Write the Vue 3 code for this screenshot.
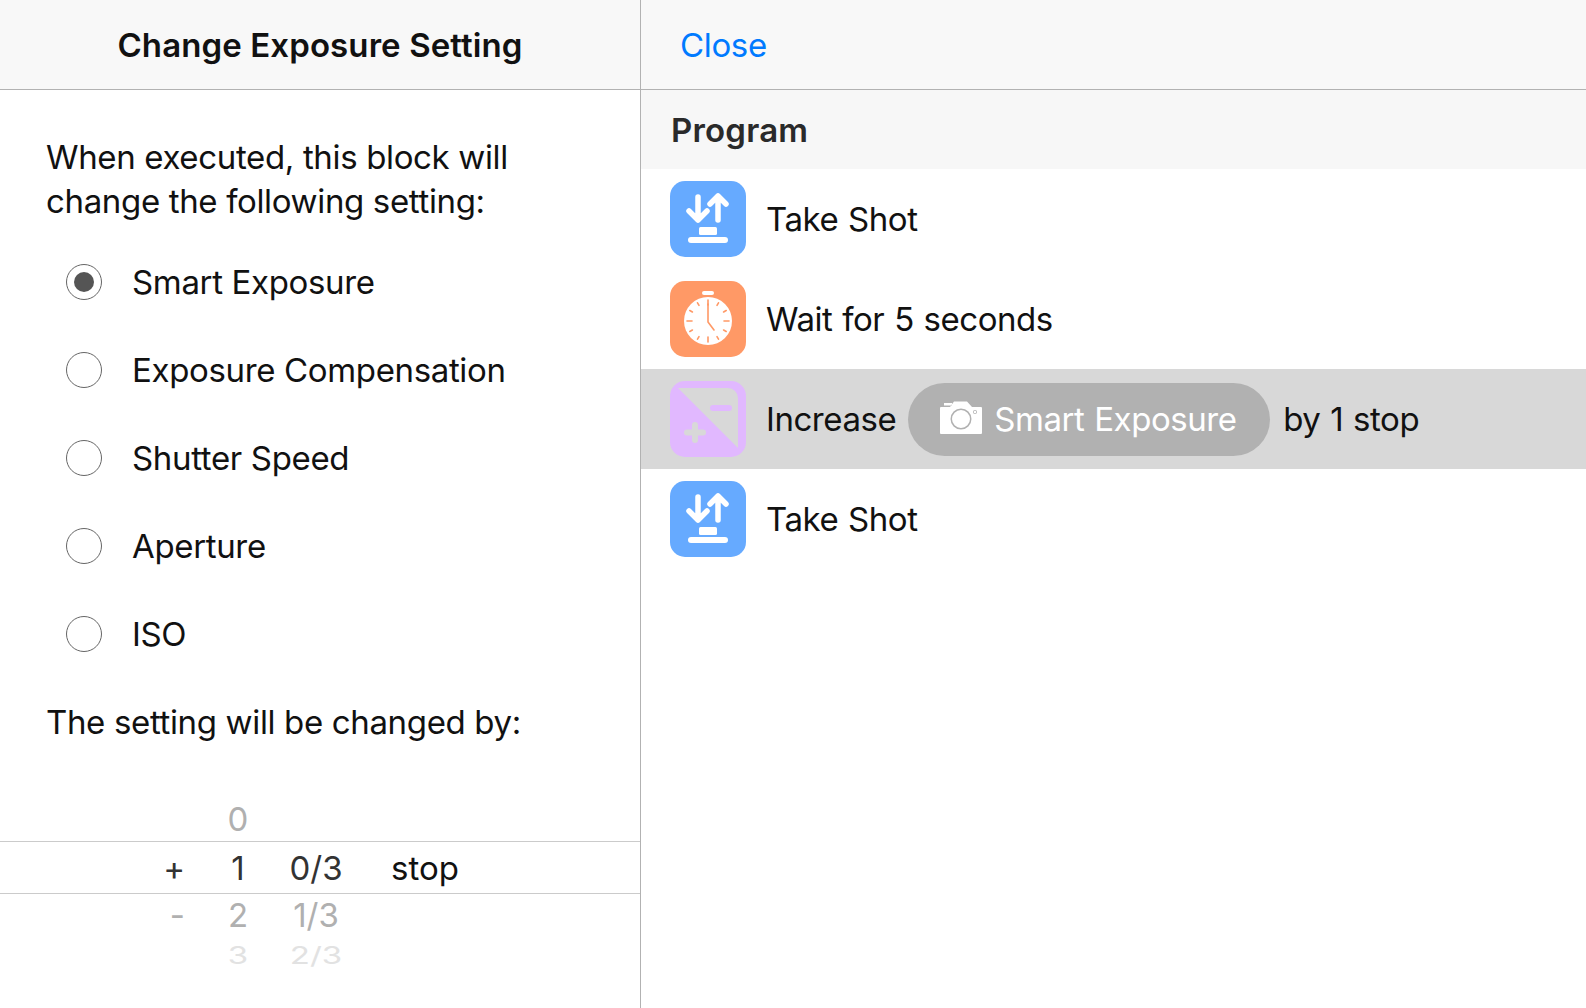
<template>
  <div class="screen">
    <div class="left">
      <header class="bar title">Change Exposure Setting</header>
      <p class="intro">When executed, this block will<br />change the following setting:</p>
      <div class="options">
        <div v-for="(opt, i) in options" :key="opt" class="option">
          <span class="radio" :class="{ on: i === 0 }"></span>
          <span>{{ opt }}</span>
        </div>
      </div>
      <p class="by">The setting will be changed by:</p>
      <div class="picker">
        <div class="prow far top"><span></span><span>0</span><span></span><span></span></div>
        <div class="prow sel"><span>+</span><span>1</span><span>0/3</span><span class="unit">stop</span></div>
        <div class="prow far"><span>-</span><span>2</span><span>1/3</span><span></span></div>
        <div class="prow farther"><span></span><span>3</span><span>2/3</span><span></span></div>
      </div>
    </div>

    <div class="right">
      <header class="bar close-bar"><span class="close">Close</span></header>
      <div class="section">Program</div>

      <div class="row">
        <div class="ico blue">
          <svg viewBox="0 0 76 76" width="76" height="76"><use href="#shot" /></svg>
        </div>
        <span>Take Shot</span>
      </div>

      <div class="row">
        <div class="ico orange">
          <svg viewBox="0 0 76 76" width="76" height="76">
            <rect x="32" y="10" width="12" height="4" rx="2" fill="#fff" />
            <circle cx="38" cy="40" r="24" fill="#fff" />
            <g stroke="#ff9966" stroke-width="1.6" stroke-linecap="round">
              <line v-for="a in ticks" :key="a" x1="38" y1="19" x2="38" :y2="a % 90 === 0 ? 24 : 22" :transform="`rotate(${a} 38 40)`" />
            </g>
            <path d="M38 23V41L44 49" fill="none" stroke="#ff9966" stroke-width="1.6" stroke-linecap="round" stroke-linejoin="round" />
          </svg>
        </div>
        <span>Wait for 5 seconds</span>
      </div>

      <div class="row active">
        <div class="ico purple">
          <svg viewBox="0 0 76 76" width="76" height="76">
            <path d="M8 7H58A10 10 0 0 1 68 17V67Z" fill="#d8d8d8" />
            <rect x="40" y="24" width="22" height="6" rx="3" fill="#e1b8ff" />
            <rect x="14" y="48.500" width="22" height="6" rx="3" fill="#d8d8d8" />
            <rect x="22" y="41" width="6" height="21" rx="3" fill="#d8d8d8" />
          </svg>
        </div>
        <span>Increase</span>
        <div class="pill">
          <svg viewBox="0 0 42 33" width="42" height="33">
            <path fill-rule="evenodd" fill="#fff" d="M4 2H12V4.500H4ZM1 6H10L14 0.500H27L32 6H41A1 1 0 0 1 42 7V32A1 1 0 0 1 41 33H1A1 1 0 0 1 0 32V7A1 1 0 0 1 1 6ZM21 7.500A10.500 10.500 0 1 0 21 28.500A10.500 10.500 0 1 0 21 7.500ZM21 9A9 9 0 1 1 21 27A9 9 0 1 1 21 9ZM35 9A2 2 0 1 0 35 13A2 2 0 1 0 35 9ZM35 9.800A1.200 1.200 0 1 1 35 12.200A1.200 1.200 0 1 1 35 9.800Z" />
          </svg>
          <span>Smart Exposure</span>
        </div>
        <span>by 1 stop</span>
      </div>

      <div class="row">
        <div class="ico blue">
          <svg viewBox="0 0 76 76" width="76" height="76"><use href="#shot" /></svg>
        </div>
        <span>Take Shot</span>
      </div>
    </div>

    <svg width="0" height="0" class="defs">
      <defs>
        <g id="shot" fill="none" stroke="#fff" stroke-width="5.500" stroke-linecap="round" stroke-linejoin="round">
          <path d="M28 16V39M19 30L28 39L37 30" />
          <path d="M48 39V15M40 23L48 15L56 23" />
          <rect x="29" y="46" width="18" height="8" rx="1.500" fill="#fff" stroke="none" />
          <rect x="18" y="56" width="40" height="6" rx="3" fill="#fff" stroke="none" />
        </g>
      </defs>
    </svg>
  </div>
</template>

<script setup>
const options = ['Smart Exposure', 'Exposure Compensation', 'Shutter Speed', 'Aperture', 'ISO']
const ticks = [0, 30, 60, 90, 120, 150, 180, 210, 240, 270, 300, 330]
</script>

<style scoped>
.screen {
  width: 1586px;
  height: 1008px;
  display: flex;
  overflow: hidden;
  background: #fff;
  color: #111;
  font-family: Inter, "Noto Sans", sans-serif;
  font-size: 33px;
  letter-spacing: -0.35px;
}
.left {
  width: 640px;
  border-right: 1px solid #b2b2b2;
  display: flex;
  flex-direction: column;
}
.right {
  flex: 1;
}
.bar {
  height: 89px;
  padding-top: 1px;
  box-sizing: content-box;
  margin-top: -1px;
  background: #f8f8f8;
  border-bottom: 1px solid #b2b2b2;
  display: flex;
  align-items: center;
}
.title {
  justify-content: center;
  font-weight: 600;
  letter-spacing: 0.1px;
}
.intro {
  margin: 45px 0 0 46px;
  line-height: 44px;
}
.options {
  margin-top: 15px;
}
.option {
  height: 88px;
  display: flex;
  align-items: center;
  margin-left: 66px;
  gap: 30px;
}
.radio {
  width: 36px;
  height: 36px;
  box-sizing: border-box;
  border: 1px solid #666;
  border-radius: 50%;
  position: relative;
}
.radio.on::after {
  content: "";
  position: absolute;
  left: 7px;
  top: 7px;
  width: 20px;
  height: 20px;
  border-radius: 50%;
  background: #555;
}
.by {
  margin: 22px 0 0 46px;
  line-height: 45px;
}
.picker {
  margin-top: 49px;
  letter-spacing: 0;
}
.prow {
  display: grid;
  grid-template-columns: 192px 92px 64px auto;
  text-align: center;
  align-items: center;
  height: 41px;
}
.prow > span:first-child {
  text-align: right;
  padding-right: 7px;
}
.prow.top {
  height: 47px;
  box-sizing: border-box;
  padding-top: 2px;
}
.prow .unit {
  text-align: left;
  margin-left: 43px;
}
.prow.far {
  color: #b0b0b0;
}
.prow.sel {
  height: 53px;
  box-sizing: border-box;
  border-top: 1px solid #cbcbcb;
  border-bottom: 1px solid #cbcbcb;
  color: #333;
}
.prow.sel .unit {
  color: #111;
}
.prow.farther {
  color: #e2e2e2;
  height: 32px;
}
.prow.farther span {
  display: block;
  transform: scaleY(0.72);
}
.section {
  height: 78px;
  padding-top: 1px;
  background: #f7f7f7;
  display: flex;
  align-items: center;
  padding-left: 30px;
  font-weight: 600;
  color: #2a2a2a;
  letter-spacing: 0.2px;
}
.row {
  height: 100px;
  display: flex;
  align-items: center;
  padding-left: 29px;
  letter-spacing: -0.45px;
  word-spacing: 1px;
}
.row.active {
  background: #d8d8d8;
}
.ico {
  width: 76px;
  height: 76px;
  border-radius: 15px;
  margin-right: 20px;
}
.ico svg {
  display: block;
}
.blue {
  background: #66aaff;
}
.orange {
  background: #ff9966;
}
.purple {
  background: #e1b8ff;
}
.pill {
  height: 73px;
  width: 362px;
  border-radius: 37px;
  background: #b1b1b1;
  color: #fff;
  margin: 0 13px 0 12px;
  display: flex;
  align-items: center;
  padding-left: 32px;
  gap: 12px;
  box-sizing: border-box;
}
.pill svg {
  flex: none;
  margin-top: -3px;
}
.close {
  color: #007aff;
  margin-left: 39px;
}
.defs {
  position: absolute;
}
</style>
